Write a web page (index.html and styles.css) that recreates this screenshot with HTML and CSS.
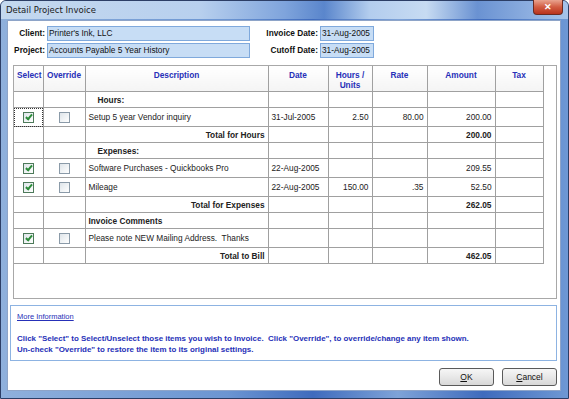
FILE: index.html
```html
<!DOCTYPE html>
<html lang="en">
<head>
    <meta charset="UTF-8">
    <title>Detail Project Invoice</title>
    <link rel="stylesheet" href="styles.css">
</head>
<body>
<div class="window">
    <div class="titlebar">
        <span class="title">Detail Project Invoice</span>
        <span class="close">&#x2715;</span>
    </div>
    <div class="client">
        <div class="head">
            <label class="lbl">Client:</label>
            <div class="field">Printer's Ink, LLC</div>
            <label class="lbl">Invoice Date:</label>
            <div class="field">31-Aug-2005</div>
            <label class="lbl">Project:</label>
            <div class="field">Accounts Payable 5 Year History</div>
            <label class="lbl">Cutoff Date:</label>
            <div class="field">31-Aug-2005</div>
        </div>

        <div class="gridbox">
            <table class="grid">
                <colgroup>
                    <col style="width:29px">
                    <col style="width:42px">
                    <col style="width:183px">
                    <col style="width:60px">
                    <col style="width:44px">
                    <col style="width:55px">
                    <col style="width:68px">
                    <col style="width:48px">
                </colgroup>
                <tr class="hdr">
                    <th>Select</th><th>Override</th><th>Description</th><th>Date</th>
                    <th>Hours /<br>Units</th><th>Rate</th><th>Amount</th><th>Tax</th>
                </tr>
                <tr class="group">
                    <td></td><td></td><td class="sub">Hours:</td><td></td><td></td><td></td><td></td><td></td>
                </tr>
                <tr class="item">
                    <td class="focus"><span class="cb on"></span></td><td><span class="cb"></span></td>
                    <td>Setup 5 year Vendor inquiry</td><td>31-Jul-2005</td>
                    <td class="num">2.50</td><td class="num">80.00</td><td class="num">200.00</td><td></td>
                </tr>
                <tr class="total">
                    <td></td><td></td><td class="tot">Total for Hours</td><td></td><td></td><td></td><td class="num b">200.00</td><td></td>
                </tr>
                <tr class="group">
                    <td></td><td></td><td class="sub">Expenses:</td><td></td><td></td><td></td><td></td><td></td>
                </tr>
                <tr class="item">
                    <td><span class="cb on"></span></td><td><span class="cb"></span></td>
                    <td>Software Purchases - Quickbooks Pro</td><td>22-Aug-2005</td>
                    <td></td><td></td><td class="num">209.55</td><td></td>
                </tr>
                <tr class="item">
                    <td><span class="cb on"></span></td><td><span class="cb"></span></td>
                    <td>Mileage</td><td>22-Aug-2005</td>
                    <td class="num">150.00</td><td class="num">.35</td><td class="num">52.50</td><td></td>
                </tr>
                <tr class="total">
                    <td></td><td></td><td class="tot">Total for Expenses</td><td></td><td></td><td></td><td class="num b">262.05</td><td></td>
                </tr>
                <tr class="group">
                    <td></td><td></td><td class="b">Invoice Comments</td><td></td><td></td><td></td><td></td><td></td>
                </tr>
                <tr class="item">
                    <td><span class="cb on"></span></td><td><span class="cb"></span></td>
                    <td>Please note NEW Mailing Address.&nbsp; Thanks</td><td></td>
                    <td></td><td></td><td></td><td></td>
                </tr>
                <tr class="total">
                    <td></td><td></td><td class="tot">Total to Bill</td><td></td><td></td><td></td><td class="num b">462.05</td><td></td>
                </tr>
            </table>
        </div>

        <div class="info">
            <a class="more" href="#">More Information</a>
            <p class="hint">Click "Select" to Select/Unselect those items you wish to Invoice.&nbsp; Click "Override", to override/change any item shown.<br>
            Un-check "Override" to restore the item to its original settings.</p>
        </div>

        <div class="buttons">
            <button class="btn"><u>O</u>K</button>
            <button class="btn"><u>C</u>ancel</button>
        </div>
    </div>
</div>
</body>
</html>
```

FILE: styles.css
```css
body{
    margin:0;
    font-family:"Liberation Sans", Arial, sans-serif;
    font-size:8.3px;
    color:#222;
}
.window{
    width:569px;
    height:399px;
    box-sizing:border-box;
    border:1px solid #2c3e66;
    border-radius:6px 6px 0 0;
    background:linear-gradient(90deg, #8fb0dc 0%, #6b95d2 40%, #3f6bbd 55%, #7ea3d8 70%, #3f6bbd 85%, #6e98d4 100%);
    display:flex;
    flex-direction:column;
}
.titlebar{
    height:19px;
    position:relative;
    display:flex;
    align-items:center;
    padding-left:5px;
    background:linear-gradient(90deg, #c4d8ef 0%, #b8d0ee 35%, #7fa4dc 50%, #5a86cc 57%, #b3cdee 65%, #c7dbf2 75%, #6a92d2 84%, #a6c3ea 100%);
    border-radius:5px 5px 0 0;
}
.title{
    font-family:"DejaVu Sans", sans-serif;
    font-size:8.5px;
    color:#1a1a1a;
}
.close{
    position:absolute;
    right:5px;
    top:-1px;
    width:30px;
    height:15px;
    box-sizing:border-box;
    border:1px solid #6b2a22;
    border-top:none;
    border-radius:0 0 4px 4px;
    background:linear-gradient(#e9a38f, #d25c42 50%, #b8321d);
    color:#fff;
    font-size:9px;
    font-weight:bold;
    display:flex;
    align-items:center;
    justify-content:center;
}
.client{
    flex:1;
    margin:1px 7px 7px 6px;
    border:1px solid #8ea4c8;
    background:#fff;
    display:flex;
    flex-direction:column;
    padding:5px 3px 4px 0;
}
.head{
    display:grid;
    grid-template-columns:37px 203px 66px 54px;
    column-gap:2px;
    row-gap:2px;
}
.lbl{
    font-weight:bold;
    color:#111;
    text-align:right;
    line-height:15px;
    white-space:nowrap;
}
.field{
    height:15px;
    box-sizing:border-box;
    border:1px solid #7fa9dc;
    background:#c7ddf5;
    color:#111;
    padding-left:1px;
    line-height:13px;
    white-space:nowrap;
    overflow:hidden;
}
.gridbox{
    margin:7px 0 0 5px;
    height:234px;
    box-sizing:border-box;
    border:1px solid #a8a8a8;
}
.grid{
    border-collapse:collapse;
    table-layout:fixed;
    width:529px;
}
.grid th, .grid td{
    border-left:1px solid #a0a0a0;
    border-right:1px solid #a0a0a0;
    border-bottom:1px solid #a0a0a0;
    padding:0 3px;
    white-space:nowrap;
    overflow:hidden;
}
.grid tr > :first-child{
    border-left:none;
}
.grid th{
    color:#2630b8;
    font-weight:bold;
    vertical-align:top;
    padding-top:4px;
    height:21px;
    line-height:10px;
    background:linear-gradient(#ffffff, #f4f4f4);
}
.group td{ height:15px; }
.item td{ height:18px; }
.total td{ height:15px; }
.grid td:nth-child(1), .grid td:nth-child(2){
    text-align:center;
    padding:0;
}
.focus{
    outline:1px dotted #333;
    outline-offset:-1px;
}
.sub{
    font-weight:bold;
    padding-left:12px !important;
}
.b{ font-weight:bold; }
.tot{
    font-weight:bold;
    text-align:right;
}
.num{ text-align:right; }
.cb{
    display:inline-block;
    width:11px;
    height:11px;
    box-sizing:border-box;
    border:1px solid #8a9aa8;
    background:linear-gradient(135deg, #dfe5ea, #ffffff);
    vertical-align:middle;
    position:relative;
}
.cb.on{
    border-color:#4d7a5a;
}
.cb.on::after{
    content:"";
    position:absolute;
    left:3px;
    top:0px;
    width:2px;
    height:5px;
    border-right:2px solid #2c8c3a;
    border-bottom:2px solid #2c8c3a;
    transform:rotate(40deg);
}
.info{
    margin:6px 0 0 2px;
    height:56px;
    box-sizing:border-box;
    border:1px solid #8db3e2;
    padding:5px 6px;
}
.more{
    color:#2630b8;
    font-size:7.5px;
}
.hint{
    margin:12px 0 0 0;
    color:#2630b8;
    font-weight:bold;
    font-size:7.95px;
    line-height:11px;
}
.buttons{
    margin-top:7px;
    display:flex;
    justify-content:flex-end;
    gap:8px;
}
.btn{
    width:55px;
    height:18px;
    border:1px solid #5a5a5a;
    border-radius:3px;
    background:linear-gradient(#f6f6f6, #e8e8e8 50%, #d8d8d8);
    font-family:"Liberation Sans", Arial, sans-serif;
    font-size:8.5px;
    color:#111;
    padding:0;
}
```
